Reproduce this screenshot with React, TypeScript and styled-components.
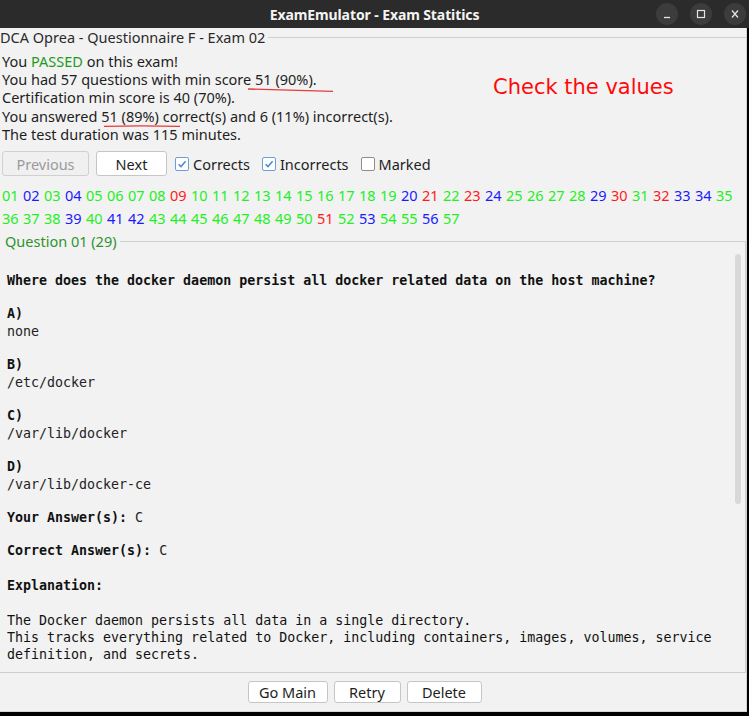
import React from 'react';
import styled, { createGlobalStyle } from 'styled-components';

const GlobalStyle = createGlobalStyle`
  html, body {
    margin: 0;
    padding: 0;
    background: #000;
  }
`;

const UI_FONT = `"Noto Sans", "Liberation Sans", sans-serif`;
const MONO_FONT = `"DejaVu Sans Mono", "Liberation Mono", monospace`;

const Window = styled.div`
  width: 749px;
  height: 716px;
  background: #000;
  display: flex;
  flex-direction: column;
  font-family: ${UI_FONT};
  overflow: hidden;
`;

const TitleBar = styled.div`
  height: 28px;
  flex-shrink: 0;
  background: #2b2b2b;
  display: grid;
  grid-template-columns: 1fr auto 1fr;
  align-items: center;
`;

const TitleText = styled.div`
  grid-column: 2;
  color: #f4f4f4;
  font-weight: 700;
  font-size: 14px;
  letter-spacing: -0.1px;
`;

const WindowButtons = styled.div`
  grid-column: 3;
  justify-self: end;
  display: flex;
  gap: 12px;
  padding-right: 3px;
  margin-top: -1px;
`;

const WinButton = styled.div`
  width: 22px;
  height: 22px;
  border-radius: 50%;
  background: #3c3c3c;
  display: flex;
  align-items: center;
  justify-content: center;
  color: #e6e6e6;
`;

const Body = styled.div`
  width: 746px;
  height: 683px;
  background: #f2f2f2;
  border-right: 1px solid #d4d4d4;
  border-bottom: 1px solid #d4d4d4;
  display: flex;
  flex-direction: column;
`;

const GroupHeader = styled.div<{ $indent?: number }>`
  display: flex;
  align-items: center;
  height: 18px;
  padding-left: ${(p) => p.$indent ?? 0}px;
`;

const GroupTitle = styled.span<{ $color?: string }>`
  font-size: 14.5px;
  color: ${(p) => p.$color ?? '#2a2a2a'};
  white-space: nowrap;
  padding-right: 3px;
`;

const GroupLine = styled.div`
  flex: 1;
  height: 1px;
  background: #cfcfcf;
`;

const StatsRow = styled.div`
  display: flex;
  padding-top: 6px;
`;

const StatsLines = styled.div`
  width: 491px;
  padding-left: 2px;
  font-size: 14.5px;
  line-height: 18.2px;
  color: #1e1e1e;
`;

const Passed = styled.span`
  color: #1f9a1f;
`;

const Mark = styled.span`
  position: relative;
`;

const MarkStroke = styled.svg<{ $left: number; $width: number; $top: number }>`
  position: absolute;
  left: ${(p) => p.$left}px;
  top: ${(p) => p.$top}px;
  width: ${(p) => p.$width}px;
  height: 5px;
  overflow: visible;
  pointer-events: none;
`;

const CheckLabel = styled.div`
  color: #ff0a0a;
  font-family: "DejaVu Sans", sans-serif;
  font-size: 21px;
  line-height: 24px;
  padding-top: 23px;
  white-space: nowrap;
`;

const Toolbar = styled.div`
  display: flex;
  align-items: center;
  padding: 8px 0 0 2px;
  height: 25px;
  gap: 7px;
`;

const PushButton = styled.button<{ $width: number; $height?: number; $disabled?: boolean }>`
  width: ${(p) => p.$width}px;
  height: ${(p) => p.$height ?? 25}px;
  box-sizing: border-box;
  font-family: ${UI_FONT};
  font-size: 14.5px;
  padding: 0;
  border-radius: 3px;
  border: 1px solid ${(p) => (p.$disabled ? '#d0d0d0' : '#c6c6c6')};
  background: ${(p) => (p.$disabled ? '#f0f0f0' : '#ffffff')};
  color: ${(p) => (p.$disabled ? '#9a9a9a' : '#1e1e1e')};
`;

const CheckGroup = styled.label`
  display: flex;
  align-items: center;
  gap: 4px;
  margin-left: 1px;
  margin-right: 4px;
  font-size: 14.5px;
  color: #1e1e1e;
`;

const Box = styled.span<{ $checked: boolean }>`
  width: 14px;
  height: 14px;
  box-sizing: border-box;
  border-radius: 2px;
  background: #ffffff;
  border: 1px solid ${(p) => (p.$checked ? '#6a9fd8' : '#8e8e8e')};
  display: flex;
  align-items: center;
  justify-content: center;
`;

const Numbers = styled.div`
  display: flex;
  flex-wrap: wrap;
  column-gap: 7px;
  padding: 8px 0 0 2px;
  font-size: 14.5px;
  line-height: 23px;
`;

const Num = styled.span<{ $tone: 'g' | 'b' | 'r' }>`
  width: 14px;
  white-space: nowrap;
  color: ${(p) => (p.$tone === 'g' ? '#22f022' : p.$tone === 'b' ? '#1a1aff' : '#ff1a1a')};
`;

const QuestionGroup = styled.div`
  flex: 1;
  display: flex;
  flex-direction: column;
  margin-top: 2px;
  min-height: 0;
`;

const Pane = styled.div`
  flex: 1;
  min-height: 0;
  display: flex;
  margin-top: -9px;
  border-right: 1px solid #cfcfcf;
  border-bottom: 1px solid #cfcfcf;
`;

const Content = styled.div`
  flex: 1;
  padding: 31px 0 0 7px;
  overflow: hidden;
  color: #111;
  font-family: ${MONO_FONT};
  font-size: 13.3px;
  line-height: 18px;
`;

const Para = styled.div<{ $gap?: number; $lh?: number }>`
  margin-bottom: ${(p) => p.$gap ?? 15}px;
  line-height: ${(p) => p.$lh ?? 18}px;
`;

const Bold = styled.span`
  font-weight: 700;
`;

const Answer = styled.span`
  color: #222;
`;

const ScrollTrack = styled.div`
  width: 10px;
  padding: 13px 3px 0 0;
  box-sizing: border-box;
`;

const Thumb = styled.div`
  width: 6px;
  height: 250px;
  border-radius: 3px;
  background: #d9d9d9;
`;

const Footer = styled.div`
  height: 38px;
  display: flex;
  align-items: center;
  justify-content: center;
  gap: 6px;
  padding-right: 17px;
`;

const answers: [string, string][] = [
  ['A)', 'none'],
  ['B)', '/etc/docker'],
  ['C)', '/var/lib/docker'],
  ['D)', '/var/lib/docker-ce'],
];

// g = correct, b = marked, r = incorrect
const tones = 'gbgbggggr' + 'gggggggggg' + 'brgrb' + 'gggg' + 'brgrbbg' + 'gggbgbb' + 'gggggggg' + 'rgbggbg';

const CheckMark = () => (
  <svg width="10" height="10" viewBox="0 0 10 10">
    <path d="M1.6 5.2 L4 7.6 L8.6 2.2" fill="none" stroke="#4a8ad4" strokeWidth="1.5" />
  </svg>
);

const Check = ({ label, checked }: { label: string; checked: boolean }) => (
  <CheckGroup>
    <Box $checked={checked}>{checked && <CheckMark />}</Box>
    {label}
  </CheckGroup>
);

export default function App() {
  return (
    <>
      <GlobalStyle />
      <Window>
        <TitleBar>
          <TitleText>ExamEmulator - Exam Statitics</TitleText>
          <WindowButtons>
            <WinButton>
              <svg width="10" height="10" viewBox="0 0 10 10">
                <path d="M2 8.5 H8" stroke="currentColor" strokeWidth="1.3" />
              </svg>
            </WinButton>
            <WinButton>
              <svg width="10" height="10" viewBox="0 0 10 10">
                <rect x="1.5" y="1.5" width="7" height="7" fill="none" stroke="currentColor" strokeWidth="1.2" />
              </svg>
            </WinButton>
            <WinButton>
              <svg width="10" height="10" viewBox="0 0 10 10">
                <path d="M2 1.5 L8 8.5 M8 1.5 L2 8.5" stroke="currentColor" strokeWidth="1.2" />
              </svg>
            </WinButton>
          </WindowButtons>
        </TitleBar>

        <Body>
          <GroupHeader>
            <GroupTitle>DCA Oprea - Questionnaire F - Exam 02</GroupTitle>
            <GroupLine />
          </GroupHeader>

          <StatsRow>
            <StatsLines>
              <div>
                You <Passed>PASSED</Passed> on this exam!
              </div>
              <div>
                You had 57 questions with min score{' '}
                <Mark>
                  51 (90%).
                  <MarkStroke $left={-7} $width={85} $top={19} viewBox="0 0 85 5" preserveAspectRatio="none">
                    <path d="M0 1 Q 45 2.2 85 3.4" fill="none" stroke="#e83a3a" strokeWidth="1.4" />
                  </MarkStroke>
                </Mark>
              </div>
              <div>Certification min score is 40 (70%).</div>
              <div>
                You answered{' '}
                <Mark>
                  51 (89%)
                  <MarkStroke $left={3} $width={76} $top={18} viewBox="0 0 76 5" preserveAspectRatio="none">
                    <path d="M0 2.4 Q 38 1.4 76 2.4" fill="none" stroke="#e83a3a" strokeWidth="1.4" />
                  </MarkStroke>
                </Mark>{' '}
                correct(s) and 6 (11%) incorrect(s).
              </div>
              <div>The test duration was 115 minutes.</div>
            </StatsLines>
            <CheckLabel>Check the values</CheckLabel>
          </StatsRow>

          <Toolbar>
            <PushButton $width={87} $disabled>
              Previous
            </PushButton>
            <PushButton $width={71}>Next</PushButton>
            <Check label="Corrects" checked />
            <Check label="Incorrects" checked />
            <Check label="Marked" checked={false} />
          </Toolbar>

          <Numbers>
            {tones.split('').map((t, i) => (
              <Num key={i} $tone={t as 'g' | 'b' | 'r'}>
                {String(i + 1).padStart(2, '0')}
              </Num>
            ))}
          </Numbers>

          <QuestionGroup>
            <GroupHeader $indent={5}>
              <GroupTitle $color="#2f922f">Question 01 (29)</GroupTitle>
              <GroupLine />
            </GroupHeader>
            <Pane>
              <Content>
                <Para>
                  <Bold>Where does the docker daemon persist all docker related data on the host machine?</Bold>
                </Para>
                {answers.map(([k, v]) => (
                  <Para key={k}>
                    <Bold>{k}</Bold>
                    <br />
                    <Answer>{v}</Answer>
                  </Para>
                ))}
                <Para>
                  <Bold>Your Answer(s):</Bold> <Answer>C</Answer>
                </Para>
                <Para $gap={16.5}>
                  <Bold>Correct Answer(s):</Bold> <Answer>C</Answer>
                </Para>
                <Para $gap={17.5}>
                  <Bold>Explanation:</Bold>
                </Para>
                <Para $lh={17}>
                  The Docker daemon persists all data in a single directory.
                  <br />
                  This tracks everything related to Docker, including containers, images, volumes, service definition, and secrets.
                </Para>
              </Content>
              <ScrollTrack>
                <Thumb />
              </ScrollTrack>
            </Pane>
            <Footer>
              <PushButton $width={80} $height={22}>
                Go Main
              </PushButton>
              <PushButton $width={67} $height={22}>
                Retry
              </PushButton>
              <PushButton $width={75} $height={22}>
                Delete
              </PushButton>
            </Footer>
          </QuestionGroup>
        </Body>
      </Window>
    </>
  );
}
